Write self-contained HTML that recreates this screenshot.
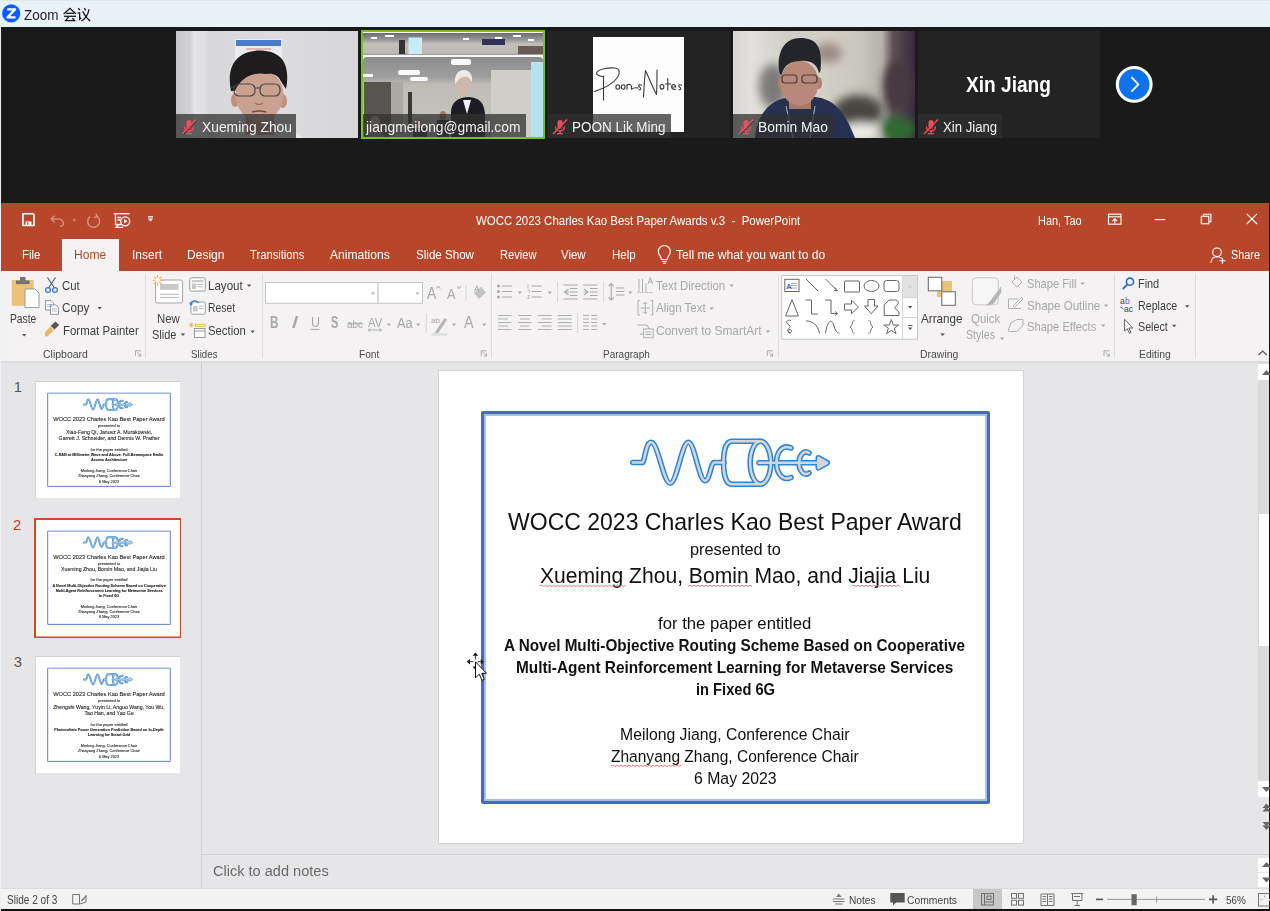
<!DOCTYPE html>
<html><head><meta charset="utf-8">
<style>
*{margin:0;padding:0;box-sizing:border-box}
html,body{width:1270px;height:911px;overflow:hidden;background:#1a1a1a}
body{position:relative;font-family:"Liberation Sans",sans-serif}
.a{position:absolute}
.t{position:absolute;white-space:nowrap;line-height:1;transform-origin:0 0}
svg{position:absolute;overflow:visible;left:0;top:0}
.tile{position:absolute;overflow:hidden}
.lbl{position:absolute;left:0;height:24px;background:rgba(48,48,48,.75)}
</style></head><body>

<div class="a" style="left:0;top:0;width:1270px;height:27px;background:#e8f3f9;border-top:1px solid #e2e6e9"></div>
<div class="a" style="left:0;top:27px;width:1270px;height:176px;background:#1a1a1a"></div>
<svg width="1270" height="30">
  <circle cx="11.2" cy="13.4" r="9.1" fill="#0b5cff"/>
  <path d="M7.2 9.4 H15.1 L7.5 17.3 H15.5" fill="none" stroke="#fff" stroke-width="2.3" stroke-linejoin="round"/>
  <g fill="none" stroke="#1a1a1a" stroke-width="1.3">
   <path d="M63.6 13.9 L70 8.3 L76 13.9"/>
   <path d="M65.8 13.3 H74.2"/>
   <path d="M64 16.3 H76"/>
   <path d="M68.8 16.6 L65.6 20.6 H74.4"/>
   <path d="M72.3 18.2 L75.2 21.2"/>
   <path d="M78.3 8.3 L79.8 10"/>
   <path d="M77.6 12.9 H79.6 V19.3 L81.2 17.8"/>
   <path d="M84.3 8.1 L85.8 10.4"/>
   <path d="M89 9.4 C88.2 14 86 18.5 81.3 21"/>
   <path d="M82.6 11.2 C84.5 15 87 18.5 90.2 20.9"/>
  </g></svg>
<div class="t" style="left:24.20px;top:6.80px;font-size:15.41px;color:#222;transform:scaleX(0.8739);">Zoom</div>
<svg width="182" height="107" style="left:176px;top:31px;overflow:hidden">
  <defs><linearGradient id="w1" x1="0" x2="1" y1="0" y2="0">
   <stop offset="0" stop-color="#c8c8ca"/><stop offset="0.08" stop-color="#d2d2d4"/><stop offset="0.1" stop-color="#e4e4e6"/><stop offset="0.16" stop-color="#e0e0e2"/>
   <stop offset="0.18" stop-color="#d8d8da"/><stop offset="0.6" stop-color="#dcdcde"/><stop offset="1" stop-color="#d6d6d8"/></linearGradient></defs>
  <rect width="182" height="107" fill="url(#w1)"/>
  <rect x="59" y="8" width="47" height="22" fill="#ececee"/>
  <rect x="60" y="9" width="45" height="6" fill="#4a7cc8"/>
  <path d="M70 18 H95" stroke="#e09090" stroke-width="1.2"/>
  <ellipse cx="84" cy="110" rx="44" ry="16" fill="#e6e6e6"/>
  <rect x="70" y="78" width="28" height="26" fill="#b88a7c"/>
  <ellipse cx="59" cy="69" rx="4" ry="7" fill="#c09080"/>
  <ellipse cx="107" cy="70" rx="4" ry="7" fill="#c09080"/>
  <ellipse cx="83.5" cy="64" rx="24" ry="26" fill="#caa090"/>
  <path d="M55 60 C50 36 60 20 83 19.5 C105 19.5 115 32 110 58 L106 52 C102 44 98 42 90 43 C80 41 66 44 59 60 Z" fill="#1e1c1d"/>
  <g fill="none" stroke="#4a4444" stroke-width="1.2"><rect x="58" y="53" width="21" height="12" rx="5"/><rect x="84" y="53" width="20" height="12" rx="5"/><path d="M79 57 H84 M54 56 H58"/></g>
  <path d="M79 72 Q83 75 87 72" stroke="#9a6a60" stroke-width="1.2" fill="none"/>
  <path d="M76 81 Q83 79 90 81" stroke="#7a4a48" stroke-width="1.4" fill="none"/>
 </svg>
<div class="a" style="left:361px;top:30px;width:184px;height:109px;border:2px solid #79c11f;background:#f6f6f6"></div>
 <svg width="180" height="105" style="left:363px;top:32px;overflow:hidden">
  <defs>
   <linearGradient id="p1" x1="0" x2="0" y1="0" y2="1"><stop offset="0" stop-color="#6c6c6e"/><stop offset="0.3" stop-color="#979798"/><stop offset="0.5" stop-color="#c0bfba"/><stop offset="0.9" stop-color="#bcbbb6"/><stop offset="1" stop-color="#9c9b98"/></linearGradient>
   <linearGradient id="p2" x1="0" x2="0" y1="0" y2="1"><stop offset="0" stop-color="#8c8c8e"/><stop offset="0.25" stop-color="#9e9e9e"/><stop offset="0.34" stop-color="#bdbcb7"/><stop offset="0.75" stop-color="#c3c2bc"/><stop offset="1" stop-color="#a9a8a3"/></linearGradient>
  </defs>
  <rect x="0" y="1" width="180" height="22" fill="url(#p1)"/>
  <g fill="#fff"><rect x="8" y="5" width="6" height="2"/><rect x="22" y="3" width="9" height="2"/><rect x="100" y="6" width="6" height="2"/><rect x="150" y="3" width="8" height="2"/><rect x="165" y="7" width="6" height="2"/><rect x="132" y="5" width="7" height="2"/></g>
  <rect x="45.5" y="5.5" width="13.5" height="16.5" fill="#c8ecf4"/>
  <rect x="119" y="7" width="23" height="6" fill="#2f3158"/>
  <rect x="36" y="8" width="6" height="14" fill="#333"/>
  <rect x="155" y="14" width="25" height="8" fill="#6a5a55"/>
  <rect x="0" y="25" width="180" height="80" rx="4" fill="url(#p2)"/>
  <g fill="#fafafa"><rect x="35" y="38" width="22" height="5" rx="2"/><rect x="47" y="45" width="18" height="4" rx="2"/><rect x="88" y="27" width="20" height="6" rx="2"/><rect x="0" y="42" width="10" height="3"/></g>
  <rect x="1" y="50" width="28" height="55" fill="#58554f"/>
  <rect x="168" y="30" width="12" height="75" fill="#b5e2ef"/>
  <rect x="128" y="38" width="40" height="67" fill="#cfcec9"/>
  <rect x="28" y="50" width="12" height="55" fill="#aaa9a4"/>
  <rect x="45" y="60" width="4" height="35" fill="#3a3836"/>
  <ellipse cx="12" cy="90" rx="5" ry="6" fill="#c8b0a0"/><rect x="5" y="95" width="15" height="10" fill="#8a8078"/>
  <ellipse cx="57" cy="92" rx="4" ry="5" fill="#b89c8c"/><rect x="50" y="96" width="14" height="9" fill="#3c3a3c"/>
  <ellipse cx="80" cy="84" rx="3.5" ry="5" fill="#9c7c70"/><rect x="74" y="88" width="12" height="17" fill="#2a2a2e"/>
  <path d="M88 105 V80 C88 70 96 65 106 65 C116 66 122 70 122 85 V105 Z" fill="#1c1c22"/>
  <path d="M100 68 L104 82 L108 68 Z" fill="#f2f2f2"/>
  <ellipse cx="100" cy="53" rx="8" ry="12" fill="#cdb8aa"/>
  <path d="M92 52 C91 42 96 38 101 38 C107 38 110 43 109 50 L106 46 C103 44 97 44 94 50 Z" fill="#ecebe8"/>
 </svg>
<div class="tile" style="left:547px;top:31px;width:183px;height:107px;background:#232323">
   <div class="a" style="left:46px;top:6px;width:91px;height:95px;background:#fdfdfd"></div>
  </div>
<svg width="1270" height="200" style="left:0;top:0"><g fill="none" stroke="#3a3a3a" stroke-width="1.1" stroke-linecap="round" stroke-linejoin="round">
   <path d="M603.5 76 V100"/>
   <path d="M603 76.5 C598 76 595.5 74 597 72 C599.5 69 608 67.5 614.5 68 C620 68.5 620.5 73 617.5 77.5 C614 82.5 605 88 594.5 91.5"/>
   <ellipse cx="617.8" cy="87" rx="1.9" ry="2.2"/><ellipse cx="623.2" cy="87" rx="1.9" ry="2.2"/>
   <path d="M627 89.3 V85 C628.5 84 631 84 631.5 86.5 V89.3 C633 88 636 87.5 638 88"/>
   <path d="M641.5 85.3 C639.5 84 637.8 85.3 639.2 86.8 C641 88 641.5 89.7 639 89.7"/>
   <path d="M643.5 97 C644 88 644.5 78 645.5 70.5 C649 78 653 88 656.5 94.5 C657 86 657 78 657 70"/>
   <ellipse cx="662" cy="86.8" rx="1.9" ry="2.3"/>
   <path d="M667.8 78.5 V90 M665.3 84 H670.5"/>
   <path d="M671.5 87 H675.7 C675.7 84.5 673.5 84 672.3 85 C670.8 86.5 671.5 90 675.5 89.3"/>
   <path d="M681.5 85.3 C679.5 84 677.8 85.3 679.2 86.8 C681 88 681.5 89.7 679 89.7"/>
  </g></svg>
<svg width="182" height="107" style="left:733px;top:31px;overflow:hidden">
  <defs>
   <linearGradient id="b1" x1="0" x2="1" y1="0" y2="0"><stop offset="0" stop-color="#d6d5d1"/><stop offset="0.1" stop-color="#e2e1dd"/><stop offset="0.3" stop-color="#cfcdc8"/><stop offset="0.5" stop-color="#d3d0c6"/><stop offset="0.7" stop-color="#c9c6bb"/><stop offset="0.82" stop-color="#b5b2aa"/><stop offset="0.88" stop-color="#5e5056"/><stop offset="1" stop-color="#35293a"/></linearGradient>
   <filter id="bl" x="-50%" y="-50%" width="200%" height="200%"><feGaussianBlur stdDeviation="5"/></filter>
  </defs>
  <rect width="182" height="107" fill="url(#b1)"/>
  <g filter="url(#bl)">
   <ellipse cx="40" cy="55" rx="14" ry="22" fill="#7c7a78"/>
   <ellipse cx="95" cy="22" rx="14" ry="10" fill="#9a8a85"/>
   <ellipse cx="125" cy="80" rx="25" ry="16" fill="#4a4642"/>
   <ellipse cx="165" cy="55" rx="15" ry="25" fill="#453b40"/>
   <ellipse cx="165" cy="98" rx="18" ry="12" fill="#2f6a30"/>
   <ellipse cx="128" cy="100" rx="18" ry="8" fill="#f0eeea"/>
  </g>
  <path d="M22 107 C24 82 38 68 58 66 H82 C102 68 112 82 122 107 Z" fill="#263150"/>
  <rect x="56" y="60" width="22" height="18" fill="#a77a6a"/>
  <ellipse cx="48" cy="52" rx="3.5" ry="6" fill="#b08070"/><ellipse cx="85.5" cy="52" rx="3.5" ry="6" fill="#b08070"/><ellipse cx="66.5" cy="52" rx="19" ry="22.5" fill="#b8897a"/>
  <path d="M46.5 42 C43 22 51 7 67 7 C83 7 90 15 87.5 40 L86 42 C84 32 76 29 67 30 C59 30 51 33 48.5 44 Z" fill="#24242b"/>
  <g fill="none" stroke="#4a3a3a" stroke-width="1.2"><rect x="49" y="44" width="15" height="8" rx="3"/><rect x="69" y="44" width="15" height="8" rx="3"/></g>
  <path d="M53 75 L60 107 M82 75 L77 107" stroke="#d8d8d8" stroke-width="0.8"/>
 </svg>
<div class="tile" style="left:918px;top:31px;width:182px;height:107px;background:#232323"></div>
<div class="t" style="left:966.30px;top:74.10px;font-size:21.80px;color:#fff;font-weight:bold;transform:scaleX(0.8761);">Xin Jiang</div>
<svg width="40" height="40" style="left:1114px;top:64px">
  <circle cx="20.2" cy="20.4" r="18.4" fill="#fff"/>
  <circle cx="20.2" cy="20.4" r="15.3" fill="#0e72ed"/>
  <path d="M17.4 13.2 L24.4 20.4 L17.4 27.6" fill="none" stroke="#fff" stroke-width="1.8"/>
 </svg>
<div class="lbl" style="left:176px;top:114.4px;width:120.0px;height:23.6px"></div>
<svg width="20" height="20" style="left:180.5px;top:119px"><g fill="#e8505b" stroke="none"><rect x="5.5" y="1" width="5" height="9" rx="2.5"/><path d="M3.5 7.5 Q3.5 12 8 12 Q12.5 12 12.5 7.5" fill="none" stroke="#e8505b" stroke-width="1.3"/><rect x="7.4" y="12" width="1.3" height="2.5"/><rect x="5" y="14" width="6" height="1.3"/></g><path d="M1 15 L15 0.5" stroke="#e8505b" stroke-width="1.5"/><path d="M2.4 15.6 L15.6 2" stroke="#303030" stroke-width="0.9"/></svg>
<div class="t" style="left:201.50px;top:120.00px;font-size:14.53px;color:#f2f2f2;transform:scaleX(0.9529);">Xueming Zhou</div>
<div class="lbl" style="left:363px;top:114.4px;width:163.0px;height:22.6px"></div>
<div class="t" style="left:366.35px;top:120.00px;font-size:14.53px;color:#f2f2f2;transform:scaleX(0.9511);">jiangmeilong@gmail.com</div>
<div class="lbl" style="left:547.5px;top:114.4px;width:123.2px;height:23.6px"></div>
<svg width="20" height="20" style="left:552.0px;top:119px"><g fill="#e8505b" stroke="none"><rect x="5.5" y="1" width="5" height="9" rx="2.5"/><path d="M3.5 7.5 Q3.5 12 8 12 Q12.5 12 12.5 7.5" fill="none" stroke="#e8505b" stroke-width="1.3"/><rect x="7.4" y="12" width="1.3" height="2.5"/><rect x="5" y="14" width="6" height="1.3"/></g><path d="M1 15 L15 0.5" stroke="#e8505b" stroke-width="1.5"/><path d="M2.4 15.6 L15.6 2" stroke="#303030" stroke-width="0.9"/></svg>
<div class="t" style="left:572.30px;top:120.00px;font-size:14.53px;color:#f2f2f2;transform:scaleX(0.9279);">POON Lik Ming</div>
<div class="lbl" style="left:733px;top:114.4px;width:99.6px;height:23.6px"></div>
<svg width="20" height="20" style="left:737.5px;top:119px"><g fill="#e8505b" stroke="none"><rect x="5.5" y="1" width="5" height="9" rx="2.5"/><path d="M3.5 7.5 Q3.5 12 8 12 Q12.5 12 12.5 7.5" fill="none" stroke="#e8505b" stroke-width="1.3"/><rect x="7.4" y="12" width="1.3" height="2.5"/><rect x="5" y="14" width="6" height="1.3"/></g><path d="M1 15 L15 0.5" stroke="#e8505b" stroke-width="1.5"/><path d="M2.4 15.6 L15.6 2" stroke="#303030" stroke-width="0.9"/></svg>
<div class="t" style="left:758.00px;top:120.00px;font-size:14.53px;color:#f2f2f2;transform:scaleX(0.9522);">Bomin Mao</div>
<div class="lbl" style="left:918px;top:114.4px;width:83.7px;height:23.6px"></div>
<svg width="20" height="20" style="left:922.5px;top:119px"><g fill="#e8505b" stroke="none"><rect x="5.5" y="1" width="5" height="9" rx="2.5"/><path d="M3.5 7.5 Q3.5 12 8 12 Q12.5 12 12.5 7.5" fill="none" stroke="#e8505b" stroke-width="1.3"/><rect x="7.4" y="12" width="1.3" height="2.5"/><rect x="5" y="14" width="6" height="1.3"/></g><path d="M1 15 L15 0.5" stroke="#e8505b" stroke-width="1.5"/><path d="M2.4 15.6 L15.6 2" stroke="#303030" stroke-width="0.9"/></svg>
<div class="t" style="left:942.80px;top:120.00px;font-size:14.53px;color:#f2f2f2;transform:scaleX(0.9062);">Xin Jiang</div>
<div class="a" style="left:0;top:203px;width:1269px;height:68px;background:#b7472a"></div>
<div class="a" style="left:1269px;top:203px;width:1px;height:708px;background:#111"></div>
<div class="a" style="left:0;top:909.4px;width:1270px;height:2px;background:#111"></div>
<svg width="1270" height="300">
 <g fill="none" stroke="#fff" stroke-width="1.6">
  <path d="M22.9 213.8 H33 L34 214.8 V225.5 H22.9 Z"/>
 </g>
 <rect x="25.5" y="221.5" width="6" height="4" fill="#fff"/>
 <rect x="27" y="222.3" width="1.3" height="2.5" fill="#b7472a"/>
 <g fill="none" stroke="#dc8f7c" stroke-width="1.5">
  <path d="M51.5 219 H58 C62 219 63.5 222 63.5 223.5 C63.5 225 62 226.5 60 226.5"/>
  <path d="M54.5 215.8 L51.3 219 L54.5 222.2"/>
  <path d="M90 216.5 A6 6 0 1 0 96.8 216.2"/>
  <path d="M95.8 213.5 L97.3 216.6 L93.8 217.6"/>
 </g>
 <path d="M72.3 219.4 H76.4 L74.35 221.4 Z" fill="#dc8f7c"/>
 <g fill="none" stroke="#fff" stroke-width="1.3">
  <path d="M113.8 213.7 H129.8"/>
  <path d="M115.5 214 V224.5 H121"/>
  <path d="M117.5 217.5 H121 M117.5 220 H120"/>
  <circle cx="125.2" cy="221.3" r="4.5"/>
  <path d="M118.5 224.5 L116 227.3 H123"/>
 </g>
 <path d="M124 219 L127.5 221.3 L124 223.6 Z" fill="#fff"/>
 <rect x="148" y="216.2" width="5" height="1.2" fill="#fff"/>
 <path d="M147.8 218.5 H153.2 L150.5 221.5 Z" fill="#fff"/>
 <!-- right icons -->
 <g fill="none" stroke="#fff" stroke-width="1.1">
  <rect x="1108.5" y="214.2" width="12.5" height="10"/>
  <path d="M1108.5 216.8 H1121"/>
  <path d="M1114.75 223.5 V218.8 M1112.5 221 L1114.75 218.8 L1117 221"/>
  <path d="M1154.8 219.6 H1165.2"/>
  <rect x="1201.3" y="216.3" width="7.5" height="7.5"/>
  <path d="M1203.5 216.3 V214.2 H1210.9 V221.6 H1208.8"/>
  <path d="M1246.8 213.8 L1257 224 M1257 213.8 L1246.8 224"/>
  <circle cx="1217" cy="252.3" r="4.3"/>
  <path d="M1210.8 262.7 C1211.5 258.5 1214 256.8 1217 256.8 C1219 256.8 1220.5 257.4 1221.6 258.4"/>
  <path d="M1219.5 260.8 H1225.5 M1222.5 257.8 V263.8"/>
 </g>
 <!-- bulb -->
 <g fill="none" stroke="#fff" stroke-width="1.1">
  <path d="M661.5 259.5 C661.5 256.5 658.3 255 658.3 251.5 A6 6 0 0 1 670.3 251.5 C670.3 255 667.3 256.5 667.3 259.5 Z"/>
  <path d="M662 261.5 H666.8 M662.8 263.3 H666"/>
 </g>
</svg>
<div class="t" style="left:475.60px;top:213.60px;font-size:13.23px;color:#fff;transform:scaleX(0.8666);">WOCC 2023 Charles Kao Best Paper Awards v.3&nbsp;&nbsp;-&nbsp;&nbsp;PowerPoint</div>
<div class="t" style="left:1037.80px;top:213.50px;font-size:13.23px;color:#fff;transform:scaleX(0.8272);">Han, Tao</div>
<div class="a" style="left:61.5px;top:239px;width:57.2px;height:33px;background:#f4f2f3"></div>
<div class="t" style="left:22.00px;top:248.30px;font-size:13.08px;color:#fff;transform:scaleX(0.8770);">File</div>
<div class="t" style="left:73.60px;top:248.30px;font-size:13.08px;color:#b7472a;transform:scaleX(0.9228);">Home</div>
<div class="t" style="left:132.00px;top:248.30px;font-size:13.08px;color:#fff;transform:scaleX(0.9173);">Insert</div>
<div class="t" style="left:186.50px;top:248.30px;font-size:13.08px;color:#fff;transform:scaleX(0.9210);">Design</div>
<div class="t" style="left:249.60px;top:248.30px;font-size:13.08px;color:#fff;transform:scaleX(0.8570);">Transitions</div>
<div class="t" style="left:330.30px;top:248.30px;font-size:13.08px;color:#fff;transform:scaleX(0.9224);">Animations</div>
<div class="t" style="left:416.00px;top:248.30px;font-size:13.08px;color:#fff;transform:scaleX(0.8859);">Slide Show</div>
<div class="t" style="left:499.50px;top:248.30px;font-size:13.08px;color:#fff;transform:scaleX(0.8500);">Review</div>
<div class="t" style="left:561.30px;top:248.30px;font-size:13.08px;color:#fff;transform:scaleX(0.8772);">View</div>
<div class="t" style="left:612.00px;top:248.30px;font-size:13.08px;color:#fff;transform:scaleX(0.8806);">Help</div>
<div class="t" style="left:675.80px;top:248.30px;font-size:13.08px;color:#fff;transform:scaleX(0.9249);">Tell me what you want to do</div>
<div class="t" style="left:1230.70px;top:248.30px;font-size:13.08px;color:#fff;transform:scaleX(0.8282);">Share</div>
<div class="a" style="left:0;top:271px;width:1269px;height:90px;background:#f4f2f3"></div>
<div class="a" style="left:0;top:360.5px;width:1269px;height:2px;background:#dcdcdd"></div>
<div class="a" style="left:0;top:271px;width:1px;height:640px;background:#e9e9e9"></div>
<div class="a" style="left:145.3px;top:274px;width:1px;height:84px;background:#dedede"></div>
<div class="a" style="left:261.7px;top:274px;width:1px;height:84px;background:#dedede"></div>
<div class="a" style="left:491.1px;top:274px;width:1px;height:84px;background:#dedede"></div>
<div class="a" style="left:777.5px;top:274px;width:1px;height:84px;background:#dedede"></div>
<div class="a" style="left:1114.3px;top:274px;width:1px;height:84px;background:#dedede"></div>
<div class="a" style="left:1194.7px;top:274px;width:1px;height:84px;background:#dedede"></div>
<div class="t" style="left:43.10px;top:347.60px;font-size:11.63px;color:#4a4a4a;transform:scaleX(0.9022);">Clipboard</div>
<div class="t" style="left:190.50px;top:347.60px;font-size:11.63px;color:#4a4a4a;transform:scaleX(0.8371);">Slides</div>
<div class="t" style="left:359.20px;top:347.60px;font-size:11.63px;color:#4a4a4a;transform:scaleX(0.8729);">Font</div>
<div class="t" style="left:603.20px;top:347.60px;font-size:11.63px;color:#4a4a4a;transform:scaleX(0.8618);">Paragraph</div>
<div class="t" style="left:919.60px;top:347.60px;font-size:11.63px;color:#4a4a4a;transform:scaleX(0.9004);">Drawing</div>
<div class="t" style="left:1139.30px;top:347.60px;font-size:11.63px;color:#4a4a4a;transform:scaleX(0.8945);">Editing</div>
<div class="t" style="left:9.70px;top:312.70px;font-size:12.06px;color:#3f3f3f;transform:scaleX(0.8524);">Paste</div>
<div class="t" style="left:62.30px;top:279.50px;font-size:12.06px;color:#3f3f3f;transform:scaleX(0.9435);">Cut</div>
<div class="t" style="left:62.30px;top:301.90px;font-size:12.06px;color:#3f3f3f;transform:scaleX(0.9727);">Copy</div>
<div class="t" style="left:62.60px;top:325.00px;font-size:12.06px;color:#3f3f3f;transform:scaleX(0.9502);">Format Painter</div>
<div class="t" style="left:156.80px;top:312.60px;font-size:12.06px;color:#3f3f3f;transform:scaleX(0.9438);">New</div>
<div class="t" style="left:151.60px;top:329.40px;font-size:12.06px;color:#3f3f3f;transform:scaleX(0.9100);">Slide</div>
<div class="t" style="left:207.90px;top:279.50px;font-size:12.06px;color:#3f3f3f;transform:scaleX(0.9607);">Layout</div>
<div class="t" style="left:207.90px;top:302.00px;font-size:12.06px;color:#3f3f3f;transform:scaleX(0.8599);">Reset</div>
<div class="t" style="left:207.90px;top:325.00px;font-size:12.06px;color:#3f3f3f;transform:scaleX(0.9395);">Section</div>
<div class="t" style="left:656.30px;top:279.70px;font-size:12.06px;color:#a8a8a8;transform:scaleX(0.9469);">Text Direction</div>
<div class="t" style="left:656.30px;top:302.40px;font-size:12.06px;color:#a8a8a8;transform:scaleX(0.9542);">Align Text</div>
<div class="t" style="left:656.30px;top:325.30px;font-size:12.06px;color:#a8a8a8;transform:scaleX(0.9917);">Convert to SmartArt</div>
<div class="t" style="left:920.90px;top:312.80px;font-size:12.06px;color:#3f3f3f;transform:scaleX(0.9693);">Arrange</div>
<div class="t" style="left:970.60px;top:312.80px;font-size:12.06px;color:#a8a8a8;transform:scaleX(0.9496);">Quick</div>
<div class="t" style="left:966.20px;top:329.40px;font-size:12.06px;color:#a8a8a8;transform:scaleX(0.8830);">Styles</div>
<div class="t" style="left:1026.60px;top:278.20px;font-size:12.06px;color:#a8a8a8;transform:scaleX(0.9226);">Shape Fill</div>
<div class="t" style="left:1026.60px;top:299.50px;font-size:12.06px;color:#a8a8a8;transform:scaleX(0.9600);">Shape Outline</div>
<div class="t" style="left:1026.60px;top:320.70px;font-size:12.06px;color:#a8a8a8;transform:scaleX(0.9267);">Shape Effects</div>
<div class="t" style="left:1138.20px;top:277.80px;font-size:12.06px;color:#3f3f3f;transform:scaleX(0.9035);">Find</div>
<div class="t" style="left:1138.20px;top:299.50px;font-size:12.06px;color:#3f3f3f;transform:scaleX(0.8876);">Replace</div>
<div class="t" style="left:1138.20px;top:320.70px;font-size:12.06px;color:#3f3f3f;transform:scaleX(0.8885);">Select</div>
<div class="t" style="left:270.40px;top:315.10px;font-size:15.99px;color:#a8a8a8;font-weight:bold;transform:scaleX(0.7358);">B</div>
<div class="t" style="left:291.20px;top:315.10px;font-size:15.99px;color:#a8a8a8;font-style:italic;transform:scaleX(1.7130);">I</div>
<div class="t" style="left:310.50px;top:315.00px;font-size:14.53px;color:#a8a8a8;transform:scaleX(0.8570);">U</div>
<div class="t" style="left:331.00px;top:315.10px;font-size:15.99px;color:#a8a8a8;font-weight:bold;transform:scaleX(0.6934);">S</div>
<div class="t" style="left:347.00px;top:318.50px;font-size:10.90px;color:#a8a8a8;transform:scaleX(0.9102);">abc</div>
<div class="t" style="left:367.70px;top:315.50px;font-size:13.08px;color:#a8a8a8;transform:scaleX(0.8615);">AV</div>
<div class="t" style="left:396.50px;top:315.10px;font-size:15.26px;color:#a8a8a8;transform:scaleX(0.8398);">Aa</div>
<div class="t" style="left:464.00px;top:315.10px;font-size:15.99px;color:#a8a8a8;transform:scaleX(0.8995);">A</div>
<div class="t" style="left:427.30px;top:285.60px;font-size:16.72px;color:#a8a8a8;transform:scaleX(0.8246);">A</div>
<div class="t" style="left:447.00px;top:286.60px;font-size:14.53px;color:#a8a8a8;transform:scaleX(0.8761);">A</div>
<svg width="1270" height="400">
<path d="M22 334 h4.4 l-2.2 2.4 z" fill="#555"/>
<path d="M97.4 307 h4.4 l-2.2 2.4 z" fill="#555"/>
<path d="M180.7 333.5 h4.4 l-2.2 2.4 z" fill="#555"/>
<path d="M246.9 284.5 h4.4 l-2.2 2.4 z" fill="#555"/>
<path d="M250.4 330.5 h4.4 l-2.2 2.4 z" fill="#555"/>
<path d="M386.6 323.5 h4.4 l-2.2 2.4 z" fill="#a8a8a8"/>
<path d="M416 323.5 h4.4 l-2.2 2.4 z" fill="#a8a8a8"/>
<path d="M451.8 323.5 h4.4 l-2.2 2.4 z" fill="#a8a8a8"/>
<path d="M482 323.5 h4.4 l-2.2 2.4 z" fill="#a8a8a8"/>
<path d="M517.6 291.5 h4.4 l-2.2 2.4 z" fill="#a8a8a8"/>
<path d="M547.6 291.5 h4.4 l-2.2 2.4 z" fill="#a8a8a8"/>
<path d="M628 291.5 h4.4 l-2.2 2.4 z" fill="#a8a8a8"/>
<path d="M602 323 h4.4 l-2.2 2.4 z" fill="#a8a8a8"/>
<path d="M729.5 284.5 h4.4 l-2.2 2.4 z" fill="#a8a8a8"/>
<path d="M709.5 307.5 h4.4 l-2.2 2.4 z" fill="#a8a8a8"/>
<path d="M765.7 330.5 h4.4 l-2.2 2.4 z" fill="#a8a8a8"/>
<path d="M940.4 333.5 h4.4 l-2.2 2.4 z" fill="#555"/>
<path d="M999.9 337.5 h4.4 l-2.2 2.4 z" fill="#a8a8a8"/>
<path d="M1080.4 282.5 h4.4 l-2.2 2.4 z" fill="#a8a8a8"/>
<path d="M1104 304.5 h4.4 l-2.2 2.4 z" fill="#a8a8a8"/>
<path d="M1101 324.5 h4.4 l-2.2 2.4 z" fill="#a8a8a8"/>
<path d="M371.5 292 h4.4 l-2.2 2.4 z" fill="#a8a8a8"/>
<path d="M416.5 292 h4.4 l-2.2 2.4 z" fill="#a8a8a8"/>
<path d="M1185 305.3 h4.4 l-2.2 2.4 z" fill="#555"/>
<path d="M1172 324.8 h4.4 l-2.2 2.4 z" fill="#555"/>

 <!-- paste -->
 <rect x="11.8" y="280" width="21.9" height="25.8" fill="#ebc27a"/>
 <rect x="16" y="280.5" width="13.5" height="3.6" fill="#737373"/>
 <rect x="20" y="277" width="5.5" height="4" fill="#737373"/>
 <path d="M25 289 H35 L39 293 V307.6 H25 Z" fill="#fff" stroke="#9a9a9a" stroke-width="1"/>
 <!-- scissors -->
 <g fill="none" stroke="#555" stroke-width="1.1"><path d="M47.5 277.5 L54.5 288 M55.5 277.5 L48.5 288"/></g>
 <g fill="none" stroke="#3d7ad6" stroke-width="1.3"><circle cx="48" cy="290" r="2.4"/><circle cx="55" cy="290" r="2.4"/></g>
 <!-- copy -->
 <g fill="#fff" stroke="#8a8a8a" stroke-width="0.9"><path d="M45.5 300.5 H51 L53.5 303 V310 H45.5 Z"/><path d="M50.5 305 H56 L58.5 307.5 V314.3 H50.5 Z"/></g>
 <g stroke="#7aa0d8" stroke-width="0.7"><path d="M47 304.5 H52 M47 306.5 H52 M52 309 H57 M52 311 H57"/></g>
 <!-- format painter -->
 <path d="M45 332 L50.5 326.5 L54 330 L48.5 335.5 Q46 337.5 45 336 Z" fill="#e5b86b"/>
 <path d="M50.8 326 L55.5 321.5 L59.2 325 L54.5 329.5 Z" fill="#555"/>
 <!-- new slide -->
 <rect x="155.6" y="280" width="27" height="23" rx="2" fill="#fff" stroke="#a6a6a6" stroke-width="1"/>
 <rect x="160" y="284" width="18.6" height="5.8" fill="#c8c8c8"/>
 <path d="M160 294.3 H178.6 M160 297.4 H178.6" stroke="#a6a6a6" stroke-width="0.8"/>
 <g stroke="#e8b65a" stroke-width="1.1"><path d="M157.7 275 V285.7 M152.4 280.3 H163 M154 276.6 L161.4 284 M161.4 276.6 L154 284"/></g>
 <circle cx="157.7" cy="280.3" r="2.2" fill="#fff"/>
 <!-- layout -->
 <rect x="189.8" y="277.8" width="15.5" height="13.3" rx="1.5" fill="#fff" stroke="#9a9a9a"/>
 <rect x="191.8" y="280" width="11.5" height="2.2" fill="#c8c8c8"/><rect x="191.8" y="283.5" width="4.5" height="5.5" fill="#c8c8c8"/>
 <path d="M197.5 284.5 H203 M197.5 286.8 H203" stroke="#aaa" stroke-width="0.8"/>
 <!-- reset -->
 <rect x="191" y="302" width="14.3" height="12.2" rx="1.5" fill="#fff" stroke="#9a9a9a"/>
 <rect x="193" y="306" width="4.5" height="5.5" fill="#c8c8c8"/><path d="M198.5 306 H203.5 M198.5 308.5 H203.5" stroke="#aaa" stroke-width="0.8"/>
 <path d="M190.5 304.5 C191.5 300.5 196.5 299.5 198.5 303" fill="none" stroke="#3d7ad6" stroke-width="1.4"/>
 <path d="M189.3 302.3 L190.5 306 L193.3 303.8 Z" fill="#3d7ad6"/>
 <!-- section -->
 <rect x="194.5" y="328.5" width="10.5" height="9" fill="#fff" stroke="#9a9a9a"/>
 <path d="M194.5 331 H205" stroke="#9a9a9a"/>
 <rect x="195.5" y="324.3" width="9.5" height="2.3" fill="#fff" stroke="#e8b65a" stroke-width="0.9"/>
 <g stroke="#e8b65a" stroke-width="0.9"><path d="M191.3 322.5 V327.5 M188.8 325 H193.8 M189.5 323.2 L193 326.8 M193 323.2 L189.5 326.8"/></g>
 <!-- font boxes -->
 <rect x="265.5" y="282.5" width="112.6" height="20.8" fill="#fff" stroke="#c6c6c6"/>
 <rect x="378.1" y="282.5" width="44.4" height="20.8" fill="#fff" stroke="#c6c6c6"/>
 <path d="M371 292.5 h4 l-2 2.2z M415.5 292.5 h4 l-2 2.2z" fill="#a8a8a8"/>
 <path d="M436.5 288.5 L438.3 286 L440.1 288.5 M457.3 286.2 L459.1 288.7 L460.9 286.2" fill="none" stroke="#a8a8a8" stroke-width="1"/>
 <path d="M466 285 V301" stroke="#d8d8d8"/>
 <path d="M474 293 L479 299 L486 292.5 L481 286.8 Z" fill="#c3c3c3"/>
 <path d="M474.5 291.5 L476.8 285.5 L479 291.5 M475.3 289.5 H478.3" fill="none" stroke="#a8a8a8" stroke-width="0.9"/>
 <path d="M310.5 329.4 H319.5" stroke="#a8a8a8" stroke-width="1"/>
 <path d="M347.5 323.8 H363" stroke="#a8a8a8" stroke-width="0.9"/>
 <path d="M368.2 330 H381.5 M368.2 330 L370.3 328.3 M368.2 330 L370.3 331.7 M381.5 330 L379.4 328.3 M381.5 330 L379.4 331.7" fill="none" stroke="#a8a8a8" stroke-width="0.9"/>
 <path d="M426.3 313 V333" stroke="#d8d8d8"/>
 <path d="M434.5 333 L444.5 318 L447 319.8 L437 334.8 Z" fill="#b5b5b5"/>
 <path d="M431.5 333 H447.3 V335.8 H431.5Z" fill="#e0e0e0"/>
 <text x="431" y="323" font-size="8" fill="#a8a8a8" font-family="Liberation Sans">ab</text>
 <!-- paragraph -->
 <g fill="#a8a8a8"><circle cx="498.5" cy="286" r="1.5"/><circle cx="498.5" cy="291.5" r="1.5"/><circle cx="498.5" cy="297" r="1.5"/></g>
 <path d="M502 286 H512.2 M502 291.5 H512.2 M502 297 H512.2" stroke="#a8a8a8" stroke-width="1"/>
 <path d="M531.5 286 H541.7 M531.5 291.5 H541.7 M531.5 297 H541.7" stroke="#a8a8a8" stroke-width="1"/>
 <path d="M528 284.5 V288.5 M527.7 290 H529.3 V293 M527.7 295.5 H529.5 L527.7 298.5 H529.5" fill="none" stroke="#a8a8a8" stroke-width="0.7"/>
 <path d="M557.5 282 V302" stroke="#d8d8d8"/>
 <path d="M563.5 285 H577.5 M570 288.5 H577.5 M570 292 H577.5 M570 295.5 H577.5 M563.5 299 H577.5" stroke="#a8a8a8" stroke-width="1"/>
 <path d="M568.5 289 L564.5 292 L568.5 295 M564.5 292 H569" fill="none" stroke="#a8a8a8" stroke-width="1.1"/>
 <path d="M583 285 H597.5 M590 288.5 H597.5 M590 292 H597.5 M590 295.5 H597.5 M583 299 H597.5" stroke="#a8a8a8" stroke-width="1"/>
 <path d="M584 289 L588 292 L584 295 M583.5 292 H588" fill="none" stroke="#a8a8a8" stroke-width="1.1"/>
 <path d="M603.6 282 V302" stroke="#d8d8d8"/>
 <path d="M611.2 283.5 V300 M608.7 286 L611.2 283.5 L613.7 286 M608.7 297.5 L611.2 300 L613.7 297.5" fill="none" stroke="#a8a8a8" stroke-width="1.1"/>
 <path d="M616 288 H624.4 M616 291.5 H624.4 M616 295 H624.4" stroke="#a8a8a8" stroke-width="1"/>
 <path d="M498 315.5 H511.5 M498 319 H508 M498 322.5 H511.5 M498 326 H508 M498 329.5 H511.5" stroke="#b0b0b0" stroke-width="1"/>
 <path d="M518 315.5 H531.5 M520 319 H529.5 M518 322.5 H531.5 M520 326 H529.5 M518 329.5 H531.5" stroke="#b0b0b0" stroke-width="1"/>
 <path d="M538 315.5 H551.7 M541.5 319 H551.7 M538 322.5 H551.7 M541.5 326 H551.7 M538 329.5 H551.7" stroke="#b0b0b0" stroke-width="1"/>
 <path d="M557.8 315.5 H571.8 M557.8 319 H571.8 M557.8 322.5 H571.8 M557.8 326 H571.8 M557.8 329.5 H571.8" stroke="#b0b0b0" stroke-width="1"/>
 <path d="M577.6 313 V333" stroke="#d8d8d8"/>
 <path d="M583 315.5 H589 M583 319 H589 M583 322.5 H589 M583 326 H589 M583 329.5 H589 M591.3 315.5 H597.3 M591.3 319 H597.3 M591.3 322.5 H597.3 M591.3 326 H597.3 M591.3 329.5 H597.3" stroke="#b0b0b0" stroke-width="1"/>
 <g fill="none" stroke="#b0b0b0" stroke-width="1">
  <path d="M639 279 V292 M642.5 279 V292 M646 283.5 V292"/>
  <path d="M637.5 292.5 H653.5" stroke-dasharray="1.3 1"/>
  <path d="M648 284 L650.3 277.5 L652.6 284 M648.8 282 H651.8"/>
  <path d="M640 300.5 H638 V315 H640 M650.5 300.5 H652.7 V315 H650.5"/>
  <path d="M645.3 302 V313.8 M643.3 304 L645.3 302 L647.3 304 M643.3 311.8 L645.3 313.8 L647.3 311.8 M640.5 308 H650"/>
  <path d="M637.5 325 L647 325 L649.5 329.5 L647 334 H640"/>
  <rect x="643.5" y="329" width="9.7" height="8.7" fill="#f3f2f2"/>
  <path d="M645.5 332 H651.3 M645.5 334.5 H651.3"/>
 </g>
 <!-- shapes gallery -->
 <rect x="781.8" y="275.5" width="135.7" height="63.7" fill="#fff" stroke="#c6c6c6"/>
 <rect x="902.6" y="276" width="14.6" height="21.4" fill="#e2e2e2"/>
 <path d="M902.6 275.5 V339.2 M902.6 297.4 H917.5 M902.6 317.5 H917.5" stroke="#d4d4d4"/>
 <path d="M908 287.5 h4.4 l-2.2 -2.4z" fill="#c8c8c8"/>
 <path d="M908 306 h4.4 l-2.2 2.4z M908 327.5 h4.4 l-2.2 2.4z" fill="#555"/>
 <path d="M908 325.5 h4.4" stroke="#555" stroke-width="1"/>
 <g fill="none" stroke="#666" stroke-width="1">
  <rect x="784.8" y="279.3" width="14.2" height="12.2"/>
  <path d="M791 283.5 H797 M791 285.5 H797 M787 288 H797" stroke="#888" stroke-width="0.7"/>
  <path d="M806 279 L818 291 M825.5 279 L837 290.5"/>
  <path d="M835 287.5 L837.3 290.8 L834 290.5" />
  <rect x="844.5" y="281" width="15" height="11" rx="0.5"/>
  <ellipse cx="871.5" cy="286" rx="7.5" ry="5.5"/>
  <rect x="884" y="280.5" width="15" height="11" rx="2.5"/>
  <path d="M785.6 316 L792 299.8 L798.4 316 Z"/>
  <path d="M805.5 300 H811.5 V314 H818"/>
  <path d="M825 300 H831 V313.5 H837.5 M835 311.5 L837.5 313.5 L835 315.5"/>
  <path d="M844.5 304 H851.5 V300.3 L858.5 307 L851.5 313.7 V310 H844.5 Z"/>
  <path d="M868 299.5 H874.5 V306 H878 L871.2 313.7 L864.5 306 H868 Z"/>
  <path d="M884.2 315.5 V305 L889 300 H895.5 C898 300 899 302.5 898 304 L894.5 308 L899 312 V315.5 Z"/>
  <path d="M791 320.5 C787 319 785 323 789 325 C793 327 786 329 788 331.5 C790 334 793 332 791 330 C789 328 787 332 790.5 334"/>
  <path d="M806 321 C812 320.5 818 325 819.5 333.5"/>
  <path d="M825.5 333 C827.5 320 832 318 834 326 C836 333 838.5 333 839.5 333"/>
  <path d="M854.5 320.5 C851.5 320.5 853 326 850 327 C853 328 851.5 333.5 854.5 333.5"/>
  <path d="M868.5 320.5 C871.5 320.5 870 326 873 327 C870 328 871.5 333.5 868.5 333.5"/>
  <path d="M891.3 319.5 L893.2 325 L898.7 325 L894.2 328.2 L896 333.7 L891.3 330.3 L886.6 333.7 L888.4 328.2 L883.9 325 L889.4 325 Z"/>
 </g>
 <text x="786" y="289" font-size="8" font-weight="bold" fill="#3d6fc2" font-family="Liberation Sans">A</text>
 <!-- arrange -->
 <rect x="937" y="281" width="15" height="16" fill="#ebc27a"/>
 <rect x="928.3" y="277.3" width="13.5" height="13.5" fill="#fff" stroke="#6a6a6a" stroke-width="1"/>
 <rect x="941.8" y="291.8" width="13.5" height="13.5" fill="#fff" stroke="#6a6a6a" stroke-width="1"/>
 <!-- quick styles -->
 <rect x="972.3" y="277.8" width="26" height="27" rx="4" fill="#f6f6f6" stroke="#c8c8c8" stroke-width="1"/>
 <path d="M986 306 L991 300 L1001 286.5 L1001.5 292 L994 303.5 Z" fill="#b5b5b5"/>
 <!-- shape fill/outline/effects -->
 <g fill="none" stroke="#b0b0b0" stroke-width="1">
  <path d="M1012 282 L1017 277 L1022 282 L1017 287 Z"/><path d="M1014.5 279.5 V275.5"/>
  <path d="M1008.5 299 H1018 M1008.5 299 V308.5 H1021"/><path d="M1013 306 L1021.5 297.5 L1023 299 L1014.5 307.5 Z"/>
  <path d="M1011 323 L1017 319.5 H1023 V325 L1017 331.5 H1009.5 C1008 331.5 1008 329 1009 328 Z"/>
 </g>
 <!-- find/replace/select -->
 <circle cx="1130" cy="281.7" r="3.6" fill="none" stroke="#2f6bc2" stroke-width="1.6"/>
 <path d="M1127.4 284.4 L1122.8 289" stroke="#2f6bc2" stroke-width="1.8"/>
 <text x="1120" y="304" font-size="8.5" fill="#444" font-family="Liberation Sans">a</text>
 <text x="1125" y="304" font-size="8.5" fill="#8a4bb5" font-family="Liberation Sans">b</text>
 <text x="1124" y="311.5" font-size="8.5" fill="#444" font-family="Liberation Sans">ac</text>
 <path d="M1120.3 307 L1123.5 309" stroke="#2f6bc2" stroke-width="1"/>
 <path d="M1124.6 319.3 V331 L1127.2 328.6 L1129.5 333.3 L1131 332.5 L1128.8 328 L1132.7 328 Z" fill="#fff" stroke="#555" stroke-width="0.9"/>
 <!-- launchers -->
 <g fill="none" stroke="#9a9a9a" stroke-width="0.8">
  <path d="M135.5 356 V350.8 H141 M137 352.3 L140.8 356 M140.8 353.5 V356 H138.3"/>
  <path d="M481.3 356 V350.8 H486.8 M482.8 352.3 L486.6 356 M486.6 353.5 V356 H484.1"/>
  <path d="M767.3 356 V350.8 H772.8 M768.8 352.3 L772.6 356 M772.6 353.5 V356 H770.1"/>
  <path d="M1104 356 V350.8 H1109.5 M1105.5 352.3 L1109.3 356 M1109.3 353.5 V356 H1106.8"/>
 </g>
 <path d="M1258.5 355 L1262.7 351 L1266.8 355" fill="none" stroke="#555" stroke-width="1.2"/>
</svg>
<div class="a" style="left:1px;top:362.5px;width:1268px;height:526px;background:#e6e6e8"></div>
<div class="a" style="left:201.2px;top:363px;width:1px;height:525px;background:#cfcfd1"></div>
<div class="a" style="left:202px;top:854px;width:1067px;height:1px;background:#d0d0d2"></div>
<div class="a" style="left:438.0px;top:370px;width:586px;height:474px;background:#fefefe;border:1px solid #d2d2d2">
<div class="a" style="left:-1px;top:-0.5px;width:586px;height:474px">
<div class="a" style="left:43.0px;top:40.5px;width:509px;height:393px;border:3px solid #4569c6;border-radius:2px"></div>
<div class="a" style="left:46.0px;top:43.5px;width:503px;height:387px;border:2px solid #a9bde6"></div>
<svg width="600" height="480" style="left:0;top:0"><g transform="translate(-438.0,-370.5)" fill="none" stroke-linecap="round" stroke-linejoin="round"><path d="M632.8 462 H642.5 C644.8 462 645.5 441.8 651.2 441.8 C658.1 441.8 663.3 482.7 670.2 482.7 C676.8 482.7 681.8 441.8 688.4 441.8 C694.4 441.8 699 480.2 705 480.2 C710 480.2 710.5 462 714.4 462 H724" stroke="#2a86d9" stroke-width="5.6"/><path d="M760 440.8 H732 C726 440.8 723.5 450 723.5 462.2 C723.5 474 726 483.7 732 483.7 H760" stroke="#2a86d9" stroke-width="5.6"/><path d="M760.5 440.8 C766 440.8 770.8 450 770.8 462.2 C770.8 474 766 483.7 760.5 483.7 C755 483.7 750.2 474 750.2 462.2 C750.2 450 755 440.8 760.5 440.8 Z" stroke="#2a86d9" stroke-width="5.6"/><path d="M759 462.3 H818" stroke="#2a86d9" stroke-width="5.6"/><path d="M791 447.5 C782 443.5 776.5 452 776.5 462 C776.5 472 782 481 791 477" stroke="#2a86d9" stroke-width="5.6"/><path d="M809 452.5 C803.5 448.5 799 456 799 462.5 C799 469 803.5 476.5 809 472.5" stroke="#2a86d9" stroke-width="5.6"/><path d="M818.3 457.2 L827.3 462.3 L818.3 467.4 Z" stroke="#2a86d9" stroke-width="5.6"/><path d="M632.8 462 H642.5 C644.8 462 645.5 441.8 651.2 441.8 C658.1 441.8 663.3 482.7 670.2 482.7 C676.8 482.7 681.8 441.8 688.4 441.8 C694.4 441.8 699 480.2 705 480.2 C710 480.2 710.5 462 714.4 462 H724" stroke="#d6d6d6" stroke-width="2.5"/><path d="M760 440.8 H732 C726 440.8 723.5 450 723.5 462.2 C723.5 474 726 483.7 732 483.7 H760" stroke="#d6d6d6" stroke-width="2.5"/><path d="M760.5 440.8 C766 440.8 770.8 450 770.8 462.2 C770.8 474 766 483.7 760.5 483.7 C755 483.7 750.2 474 750.2 462.2 C750.2 450 755 440.8 760.5 440.8 Z" stroke="#d6d6d6" stroke-width="2.5"/><path d="M759 462.3 H818" stroke="#d6d6d6" stroke-width="2.5"/><path d="M791 447.5 C782 443.5 776.5 452 776.5 462 C776.5 472 782 481 791 477" stroke="#d6d6d6" stroke-width="2.5"/><path d="M809 452.5 C803.5 448.5 799 456 799 462.5 C799 469 803.5 476.5 809 472.5" stroke="#d6d6d6" stroke-width="2.5"/><path d="M818.3 457.2 L827.3 462.3 L818.3 467.4 Z" stroke="#d6d6d6" stroke-width="2.5" fill="#d6d6d6"/></g></svg>
<div class="t" style="left:70.40px;top:140.40px;font-size:23.26px;color:#111;transform:scaleX(0.9900);">WOCC 2023 Charles Kao Best Paper Award</div>
<div class="t" style="left:251.90px;top:171.20px;font-size:15.72px;color:#111;transform:scaleX(1.0397);">presented to</div>
<div class="t" style="left:101.90px;top:195.20px;font-size:21.51px;color:#111;transform:scaleX(0.9807);">Xueming Zhou, Bomin Mao, and Jiajia Liu</div>
<div class="t" style="left:220.40px;top:244.80px;font-size:16.28px;color:#111;transform:scaleX(1.0269);">for the paper entitled</div>
<div class="t" style="left:66.40px;top:267.80px;font-size:15.84px;color:#111;font-weight:bold;transform:scaleX(0.9664);">A Novel Multi-Objective Routing Scheme Based on Cooperative</div>
<div class="t" style="left:78.30px;top:289.90px;font-size:15.84px;color:#111;font-weight:bold;transform:scaleX(0.9710);">Multi-Agent Reinforcement Learning for Metaverse Services</div>
<div class="t" style="left:257.80px;top:311.50px;font-size:15.84px;color:#111;font-weight:bold;transform:scaleX(0.9263);">in Fixed 6G</div>
<div class="t" style="left:182.30px;top:355.90px;font-size:16.13px;color:#111;transform:scaleX(0.9783);">Meilong Jiang, Conference Chair</div>
<div class="t" style="left:173.00px;top:377.90px;font-size:16.13px;color:#111;transform:scaleX(0.9634);">Zhanyang Zhang, Conference Chair</div>
<div class="t" style="left:255.70px;top:399.90px;font-size:16.13px;color:#111;transform:scaleX(0.9810);">6 May 2023</div>
<svg width="600" height="480"><g transform="translate(-438.0,-370.5)"><path d="M539.5 585.3 L541.5 584.5999999999999 L543.5 586.0 L545.5 584.5999999999999 L547.5 586.0 L549.5 584.5999999999999 L551.5 586.0 L553.5 584.5999999999999 L555.5 586.0 L557.5 584.5999999999999 L559.5 586.0 L561.5 584.5999999999999 L563.5 586.0 L565.5 584.5999999999999 L567.5 586.0 L569.5 584.5999999999999 L571.5 586.0 L573.5 584.5999999999999 L575.5 586.0 L577.5 584.5999999999999 L579.5 586.0 L581.5 584.5999999999999 L583.5 586.0 L585.5 584.5999999999999 L587.5 586.0 L589.5 584.5999999999999 L591.5 586.0 L593.5 584.5999999999999 L595.5 586.0 L597.5 584.5999999999999 L599.5 586.0 L601.5 584.5999999999999 L603.5 586.0 L605.5 584.5999999999999 L607.5 586.0 L609.5 584.5999999999999 L611.5 586.0 L613.5 584.5999999999999 L615.5 586.0 L617.5 584.5999999999999 L619.5 586.0 L621.5 584.5999999999999 L623.5 586.0 L625.5 584.5999999999999" fill="none" stroke="#e06060" stroke-width="0.8"/><path d="M688 585.3 L690.0 584.5999999999999 L692.0 586.0 L694.0 584.5999999999999 L696.0 586.0 L698.0 584.5999999999999 L700.0 586.0 L702.0 584.5999999999999 L704.0 586.0 L706.0 584.5999999999999 L708.0 586.0 L710.0 584.5999999999999 L712.0 586.0 L714.0 584.5999999999999 L716.0 586.0 L718.0 584.5999999999999 L720.0 586.0 L722.0 584.5999999999999 L724.0 586.0 L726.0 584.5999999999999 L728.0 586.0 L730.0 584.5999999999999 L732.0 586.0 L734.0 584.5999999999999 L736.0 586.0 L738.0 584.5999999999999 L740.0 586.0 L742.0 584.5999999999999 L744.0 586.0 L746.0 584.5999999999999 L748.0 586.0 L750.0 584.5999999999999 L752.0 586.0" fill="none" stroke="#e06060" stroke-width="0.8"/><path d="M852 585.3 L854.0 584.5999999999999 L856.0 586.0 L858.0 584.5999999999999 L860.0 586.0 L862.0 584.5999999999999 L864.0 586.0 L866.0 584.5999999999999 L868.0 586.0 L870.0 584.5999999999999 L872.0 586.0 L874.0 584.5999999999999 L876.0 586.0 L878.0 584.5999999999999 L880.0 586.0 L882.0 584.5999999999999 L884.0 586.0 L886.0 584.5999999999999 L888.0 586.0 L890.0 584.5999999999999 L892.0 586.0 L894.0 584.5999999999999 L896.0 586.0 L898.0 584.5999999999999 L900.0 586.0" fill="none" stroke="#e06060" stroke-width="0.8"/><path d="M611 765.3 L613.0 764.5999999999999 L615.0 766.0 L617.0 764.5999999999999 L619.0 766.0 L621.0 764.5999999999999 L623.0 766.0 L625.0 764.5999999999999 L627.0 766.0 L629.0 764.5999999999999 L631.0 766.0 L633.0 764.5999999999999 L635.0 766.0 L637.0 764.5999999999999 L639.0 766.0 L641.0 764.5999999999999 L643.0 766.0 L645.0 764.5999999999999 L647.0 766.0 L649.0 764.5999999999999 L651.0 766.0 L653.0 764.5999999999999 L655.0 766.0 L657.0 764.5999999999999 L659.0 766.0 L661.0 764.5999999999999 L663.0 766.0 L665.0 764.5999999999999 L667.0 766.0 L669.0 764.5999999999999 L671.0 766.0 L673.0 764.5999999999999 L675.0 766.0 L677.0 764.5999999999999 L679.0 766.0 L681.0 764.5999999999999" fill="none" stroke="#e06060" stroke-width="0.8"/></g></svg>
</div></div>
<svg width="1270" height="911" style="left:0;top:0">
 <g stroke="#fff" stroke-width="2.6" fill="#fff" opacity="0.9"><path d="M475.4 654 V668 M468 661.7 H482.8"/></g>
 <g stroke="#333" stroke-width="1"><path d="M475.4 655.5 V659.5 M475.4 664 V667.5 M469.5 661.7 H473.3 M477.5 661.7 H481.5"/></g>
 <g fill="#111"><path d="M475.4 652.6 L472.6 655.8 H478.2 Z"/><path d="M466.8 661.7 L470 658.9 V664.5 Z"/><path d="M484 661.7 L480.8 658.9 V664.5 Z"/><path d="M475.4 669.8 L472.6 666.6 H478.2 Z"/></g>
 <path d="M475.5 661.8 V677.8 L479.3 674.2 L482 680.3 L484.3 679.3 L481.7 673.3 H486.5 Z" fill="#fff" stroke="#111" stroke-width="1" stroke-linejoin="round"/>
</svg>
<div class="a" style="left:35.3px;top:381.3px;width:145.2px;height:117.9px;background:#d4d4d4"></div>
<div class="a" style="left:36px;top:382px;width:586px;height:474px;background:#fefefe;transform:scale(0.24573);transform-origin:0 0;-webkit-text-stroke:0.35px #333">
<div class="a" style="left:45.60000000000002px;top:44.0px;width:502.6px;height:382.0px;border:3.2px solid #4569c6;border-radius:2px"></div>
<div class="a" style="left:48.80000000000001px;top:47.19999999999999px;width:496.20000000000005px;height:375.6px;border:1.8px solid #a9bde6"></div>
<svg width="600" height="480" style="left:0;top:0"><g transform="translate(-438.0,-370.5)" fill="none" stroke-linecap="round" stroke-linejoin="round"><path d="M632.8 462 H642.5 C644.8 462 645.5 441.8 651.2 441.8 C658.1 441.8 663.3 482.7 670.2 482.7 C676.8 482.7 681.8 441.8 688.4 441.8 C694.4 441.8 699 480.2 705 480.2 C710 480.2 710.5 462 714.4 462 H724" stroke="#2a86d9" stroke-width="7.5"/><path d="M760 440.8 H732 C726 440.8 723.5 450 723.5 462.2 C723.5 474 726 483.7 732 483.7 H760" stroke="#2a86d9" stroke-width="7.5"/><path d="M760.5 440.8 C766 440.8 770.8 450 770.8 462.2 C770.8 474 766 483.7 760.5 483.7 C755 483.7 750.2 474 750.2 462.2 C750.2 450 755 440.8 760.5 440.8 Z" stroke="#2a86d9" stroke-width="7.5"/><path d="M759 462.3 H818" stroke="#2a86d9" stroke-width="7.5"/><path d="M791 447.5 C782 443.5 776.5 452 776.5 462 C776.5 472 782 481 791 477" stroke="#2a86d9" stroke-width="7.5"/><path d="M809 452.5 C803.5 448.5 799 456 799 462.5 C799 469 803.5 476.5 809 472.5" stroke="#2a86d9" stroke-width="7.5"/><path d="M818.3 457.2 L827.3 462.3 L818.3 467.4 Z" stroke="#2a86d9" stroke-width="7.5"/><path d="M632.8 462 H642.5 C644.8 462 645.5 441.8 651.2 441.8 C658.1 441.8 663.3 482.7 670.2 482.7 C676.8 482.7 681.8 441.8 688.4 441.8 C694.4 441.8 699 480.2 705 480.2 C710 480.2 710.5 462 714.4 462 H724" stroke="#d6d6d6" stroke-width="2.8"/><path d="M760 440.8 H732 C726 440.8 723.5 450 723.5 462.2 C723.5 474 726 483.7 732 483.7 H760" stroke="#d6d6d6" stroke-width="2.8"/><path d="M760.5 440.8 C766 440.8 770.8 450 770.8 462.2 C770.8 474 766 483.7 760.5 483.7 C755 483.7 750.2 474 750.2 462.2 C750.2 450 755 440.8 760.5 440.8 Z" stroke="#d6d6d6" stroke-width="2.8"/><path d="M759 462.3 H818" stroke="#d6d6d6" stroke-width="2.8"/><path d="M791 447.5 C782 443.5 776.5 452 776.5 462 C776.5 472 782 481 791 477" stroke="#d6d6d6" stroke-width="2.8"/><path d="M809 452.5 C803.5 448.5 799 456 799 462.5 C799 469 803.5 476.5 809 472.5" stroke="#d6d6d6" stroke-width="2.8"/><path d="M818.3 457.2 L827.3 462.3 L818.3 467.4 Z" stroke="#d6d6d6" stroke-width="2.8" fill="#d6d6d6"/></g></svg>
<div class="t" style="left:70.40px;top:140.00px;font-size:23.26px;color:#111;transform:scaleX(0.9900);">WOCC 2023 Charles Kao Best Paper Award</div>
<div class="t" style="left:251.90px;top:170.00px;font-size:15.72px;color:#111;transform:scaleX(1.0397);">presented to</div>
<div class="t" style="left:122.06px;top:192.50px;font-size:21.51px;color:#111;transform:scaleX(0.9807);">Xiao-Feng Qi, Janusz A. Murakowski,</div>
<div class="t" style="left:91.55px;top:216.50px;font-size:21.51px;color:#111;transform:scaleX(0.9807);">Garrett J. Schneider, and Dennis W. Prather</div>
<div class="t" style="left:222.37px;top:266.00px;font-size:15.72px;color:#111;transform:scaleX(1.0397);">for the paper entitled</div>
<div class="t" style="left:76.28px;top:289.00px;font-size:15.84px;color:#111;font-weight:bold;transform:scaleX(0.9664);">C-RAN at Millimeter Wave and Above: Full-Beamspace Radio</div>
<div class="t" style="left:223.59px;top:308.00px;font-size:15.84px;color:#111;font-weight:bold;transform:scaleX(0.9664);">Access Architecture</div>
<div class="t" style="left:182.40px;top:353.50px;font-size:16.13px;color:#111;transform:scaleX(0.9783);">Meilong Jiang, Conference Chair</div>
<div class="t" style="left:171.43px;top:373.50px;font-size:16.13px;color:#111;transform:scaleX(0.9783);">Zhanyang Zhang, Conference Chair</div>
<div class="t" style="left:256.11px;top:394.50px;font-size:16.13px;color:#111;transform:scaleX(0.9783);">6 May 2023</div>
</div>
<div class="t" style="left:13.80px;top:380.20px;font-size:14.83px;color:#555;">1</div>
<div class="a" style="left:34.3px;top:518.3px;width:147.2px;height:119.9px;border:2px solid #d24726"></div>
<div class="a" style="left:36px;top:520px;width:586px;height:474px;background:#fefefe;transform:scale(0.24573);transform-origin:0 0;-webkit-text-stroke:0.35px #333">
<div class="a" style="left:45.60000000000002px;top:44.0px;width:502.6px;height:382.0px;border:3.2px solid #4569c6;border-radius:2px"></div>
<div class="a" style="left:48.80000000000001px;top:47.19999999999999px;width:496.20000000000005px;height:375.6px;border:1.8px solid #a9bde6"></div>
<svg width="600" height="480" style="left:0;top:0"><g transform="translate(-438.0,-370.5)" fill="none" stroke-linecap="round" stroke-linejoin="round"><path d="M632.8 462 H642.5 C644.8 462 645.5 441.8 651.2 441.8 C658.1 441.8 663.3 482.7 670.2 482.7 C676.8 482.7 681.8 441.8 688.4 441.8 C694.4 441.8 699 480.2 705 480.2 C710 480.2 710.5 462 714.4 462 H724" stroke="#2a86d9" stroke-width="7.5"/><path d="M760 440.8 H732 C726 440.8 723.5 450 723.5 462.2 C723.5 474 726 483.7 732 483.7 H760" stroke="#2a86d9" stroke-width="7.5"/><path d="M760.5 440.8 C766 440.8 770.8 450 770.8 462.2 C770.8 474 766 483.7 760.5 483.7 C755 483.7 750.2 474 750.2 462.2 C750.2 450 755 440.8 760.5 440.8 Z" stroke="#2a86d9" stroke-width="7.5"/><path d="M759 462.3 H818" stroke="#2a86d9" stroke-width="7.5"/><path d="M791 447.5 C782 443.5 776.5 452 776.5 462 C776.5 472 782 481 791 477" stroke="#2a86d9" stroke-width="7.5"/><path d="M809 452.5 C803.5 448.5 799 456 799 462.5 C799 469 803.5 476.5 809 472.5" stroke="#2a86d9" stroke-width="7.5"/><path d="M818.3 457.2 L827.3 462.3 L818.3 467.4 Z" stroke="#2a86d9" stroke-width="7.5"/><path d="M632.8 462 H642.5 C644.8 462 645.5 441.8 651.2 441.8 C658.1 441.8 663.3 482.7 670.2 482.7 C676.8 482.7 681.8 441.8 688.4 441.8 C694.4 441.8 699 480.2 705 480.2 C710 480.2 710.5 462 714.4 462 H724" stroke="#d6d6d6" stroke-width="2.8"/><path d="M760 440.8 H732 C726 440.8 723.5 450 723.5 462.2 C723.5 474 726 483.7 732 483.7 H760" stroke="#d6d6d6" stroke-width="2.8"/><path d="M760.5 440.8 C766 440.8 770.8 450 770.8 462.2 C770.8 474 766 483.7 760.5 483.7 C755 483.7 750.2 474 750.2 462.2 C750.2 450 755 440.8 760.5 440.8 Z" stroke="#d6d6d6" stroke-width="2.8"/><path d="M759 462.3 H818" stroke="#d6d6d6" stroke-width="2.8"/><path d="M791 447.5 C782 443.5 776.5 452 776.5 462 C776.5 472 782 481 791 477" stroke="#d6d6d6" stroke-width="2.8"/><path d="M809 452.5 C803.5 448.5 799 456 799 462.5 C799 469 803.5 476.5 809 472.5" stroke="#d6d6d6" stroke-width="2.8"/><path d="M818.3 457.2 L827.3 462.3 L818.3 467.4 Z" stroke="#d6d6d6" stroke-width="2.8" fill="#d6d6d6"/></g></svg>
<div class="t" style="left:70.40px;top:139.00px;font-size:23.26px;color:#111;transform:scaleX(0.9900);">WOCC 2023 Charles Kao Best Paper Award</div>
<div class="t" style="left:251.90px;top:169.40px;font-size:15.72px;color:#111;transform:scaleX(1.0397);">presented to</div>
<div class="t" style="left:102.10px;top:190.30px;font-size:21.51px;color:#111;transform:scaleX(0.9807);">Xueming Zhou, Bomin Mao, and Jiajia Liu</div>
<div class="t" style="left:222.37px;top:236.70px;font-size:15.72px;color:#111;transform:scaleX(1.0397);">for the paper entitled</div>
<div class="t" style="left:66.65px;top:260.00px;font-size:15.84px;color:#111;font-weight:bold;transform:scaleX(0.9664);">A Novel Multi-Objective Routing Scheme Based on Cooperative</div>
<div class="t" style="left:79.53px;top:279.70px;font-size:15.84px;color:#111;font-weight:bold;transform:scaleX(0.9664);">Multi-Agent Reinforcement Learning for Metaverse Services</div>
<div class="t" style="left:256.09px;top:301.50px;font-size:15.84px;color:#111;font-weight:bold;transform:scaleX(0.9664);">in Fixed 6G</div>
<div class="t" style="left:182.40px;top:343.50px;font-size:16.13px;color:#111;transform:scaleX(0.9783);">Meilong Jiang, Conference Chair</div>
<div class="t" style="left:171.43px;top:365.30px;font-size:16.13px;color:#111;transform:scaleX(0.9783);">Zhanyang Zhang, Conference Chair</div>
<div class="t" style="left:256.11px;top:386.00px;font-size:16.13px;color:#111;transform:scaleX(0.9783);">6 May 2023</div>
</div>
<div class="t" style="left:13.00px;top:518.20px;font-size:14.83px;color:#c43e1c;">2</div>
<div class="a" style="left:35.3px;top:656.3px;width:145.2px;height:117.9px;background:#d4d4d4"></div>
<div class="a" style="left:36px;top:657px;width:586px;height:474px;background:#fefefe;transform:scale(0.24573);transform-origin:0 0;-webkit-text-stroke:0.35px #333">
<div class="a" style="left:45.60000000000002px;top:44.0px;width:502.6px;height:382.0px;border:3.2px solid #4569c6;border-radius:2px"></div>
<div class="a" style="left:48.80000000000001px;top:47.19999999999999px;width:496.20000000000005px;height:375.6px;border:1.8px solid #a9bde6"></div>
<svg width="600" height="480" style="left:0;top:0"><g transform="translate(-438.0,-370.5)" fill="none" stroke-linecap="round" stroke-linejoin="round"><path d="M632.8 462 H642.5 C644.8 462 645.5 441.8 651.2 441.8 C658.1 441.8 663.3 482.7 670.2 482.7 C676.8 482.7 681.8 441.8 688.4 441.8 C694.4 441.8 699 480.2 705 480.2 C710 480.2 710.5 462 714.4 462 H724" stroke="#2a86d9" stroke-width="7.5"/><path d="M760 440.8 H732 C726 440.8 723.5 450 723.5 462.2 C723.5 474 726 483.7 732 483.7 H760" stroke="#2a86d9" stroke-width="7.5"/><path d="M760.5 440.8 C766 440.8 770.8 450 770.8 462.2 C770.8 474 766 483.7 760.5 483.7 C755 483.7 750.2 474 750.2 462.2 C750.2 450 755 440.8 760.5 440.8 Z" stroke="#2a86d9" stroke-width="7.5"/><path d="M759 462.3 H818" stroke="#2a86d9" stroke-width="7.5"/><path d="M791 447.5 C782 443.5 776.5 452 776.5 462 C776.5 472 782 481 791 477" stroke="#2a86d9" stroke-width="7.5"/><path d="M809 452.5 C803.5 448.5 799 456 799 462.5 C799 469 803.5 476.5 809 472.5" stroke="#2a86d9" stroke-width="7.5"/><path d="M818.3 457.2 L827.3 462.3 L818.3 467.4 Z" stroke="#2a86d9" stroke-width="7.5"/><path d="M632.8 462 H642.5 C644.8 462 645.5 441.8 651.2 441.8 C658.1 441.8 663.3 482.7 670.2 482.7 C676.8 482.7 681.8 441.8 688.4 441.8 C694.4 441.8 699 480.2 705 480.2 C710 480.2 710.5 462 714.4 462 H724" stroke="#d6d6d6" stroke-width="2.8"/><path d="M760 440.8 H732 C726 440.8 723.5 450 723.5 462.2 C723.5 474 726 483.7 732 483.7 H760" stroke="#d6d6d6" stroke-width="2.8"/><path d="M760.5 440.8 C766 440.8 770.8 450 770.8 462.2 C770.8 474 766 483.7 760.5 483.7 C755 483.7 750.2 474 750.2 462.2 C750.2 450 755 440.8 760.5 440.8 Z" stroke="#d6d6d6" stroke-width="2.8"/><path d="M759 462.3 H818" stroke="#d6d6d6" stroke-width="2.8"/><path d="M791 447.5 C782 443.5 776.5 452 776.5 462 C776.5 472 782 481 791 477" stroke="#d6d6d6" stroke-width="2.8"/><path d="M809 452.5 C803.5 448.5 799 456 799 462.5 C799 469 803.5 476.5 809 472.5" stroke="#d6d6d6" stroke-width="2.8"/><path d="M818.3 457.2 L827.3 462.3 L818.3 467.4 Z" stroke="#d6d6d6" stroke-width="2.8" fill="#d6d6d6"/></g></svg>
<div class="t" style="left:70.40px;top:140.00px;font-size:23.26px;color:#111;transform:scaleX(0.9900);">WOCC 2023 Charles Kao Best Paper Award</div>
<div class="t" style="left:251.90px;top:170.00px;font-size:15.72px;color:#111;transform:scaleX(1.0397);">presented to</div>
<div class="t" style="left:70.40px;top:192.50px;font-size:21.51px;color:#111;transform:scaleX(0.9807);">Zhengshi Wang, Yuyin Li, Anguo Wang, You Wu,</div>
<div class="t" style="left:196.88px;top:216.50px;font-size:21.51px;color:#111;transform:scaleX(0.9807);">Tao Han, and Yao Ge</div>
<div class="t" style="left:222.37px;top:266.00px;font-size:15.72px;color:#111;transform:scaleX(1.0397);">for the paper entitled</div>
<div class="t" style="left:74.46px;top:289.00px;font-size:15.84px;color:#111;font-weight:bold;transform:scaleX(0.9664);">Photovoltaic Power Generation Prediction Based on In-Depth</div>
<div class="t" style="left:211.00px;top:308.00px;font-size:15.84px;color:#111;font-weight:bold;transform:scaleX(0.9664);">Learning for Smart Grid</div>
<div class="t" style="left:182.40px;top:353.50px;font-size:16.13px;color:#111;transform:scaleX(0.9783);">Meilong Jiang, Conference Chair</div>
<div class="t" style="left:171.43px;top:373.50px;font-size:16.13px;color:#111;transform:scaleX(0.9783);">Zhanyang Zhang, Conference Chair</div>
<div class="t" style="left:256.11px;top:394.50px;font-size:16.13px;color:#111;transform:scaleX(0.9783);">6 May 2023</div>
</div>
<div class="t" style="left:13.80px;top:655.20px;font-size:14.83px;color:#555;">3</div>
<div class="a" style="left:1258.3px;top:363px;width:10.7px;height:434px;background:#dbdadb"></div>
<div class="a" style="left:1258.3px;top:364px;width:10.7px;height:16px;background:#fff"></div>
<div class="a" style="left:1258.3px;top:514px;width:10.7px;height:132px;background:#fff;border-left:1px solid #d0d0d0"></div>
<div class="a" style="left:1258.3px;top:781px;width:10.7px;height:16px;background:#fff"></div>
<div class="a" style="left:1258.3px;top:857.5px;width:10.7px;height:14.5px;background:#fff"></div>
<div class="a" style="left:1258.3px;top:873px;width:10.7px;height:14px;background:#fff"></div>
<svg width="1270" height="911">
 <g fill="#666">
  <path d="M1262 375 L1266.5 370 L1271 375 Z"/>
  <path d="M1262 787 L1266.5 792 L1271 787 Z"/>
  <path d="M1262.5 808 L1266.5 803.5 L1270.5 808 Z M1262.5 811.5 L1266.5 807 L1270.5 811.5 Z"/>
  <path d="M1262.5 822 L1266.5 826.5 L1270.5 822 Z M1262.5 825.5 L1266.5 830 L1270.5 825.5 Z"/>
  <path d="M1262 867 L1266.5 862 L1271 867 Z"/>
  <path d="M1262 877.5 L1266.5 882.5 L1271 877.5 Z"/>
 </g>
</svg>
<div class="t" style="left:213.00px;top:863.60px;font-size:14.83px;color:#6a6a6a;transform:scaleX(0.9816);">Click to add notes</div>
<div class="a" style="left:1px;top:888px;width:1268px;height:20.5px;background:#f3f2f2;border-top:1px solid #dadada"></div>
<div class="a" style="left:972.7px;top:889px;width:29.7px;height:19.5px;background:#c8c8c8"></div>
<div class="t" style="left:6.90px;top:894.70px;font-size:11.92px;color:#444;transform:scaleX(0.8453);">Slide 2 of 3</div>
<div class="t" style="left:848.70px;top:894.70px;font-size:11.34px;color:#444;transform:scaleX(0.8947);">Notes</div>
<div class="t" style="left:907.00px;top:894.70px;font-size:11.34px;color:#444;transform:scaleX(0.9122);">Comments</div>
<div class="t" style="left:1225.90px;top:894.70px;font-size:11.34px;color:#444;transform:scaleX(0.8765);">56%</div>
<svg width="1270" height="911">
 <g fill="none" stroke="#777" stroke-width="1">
  <path d="M72.7 894.5 H79.5 V904 H72.7 Z"/><path d="M79.5 904 L86 902 V895.5"/><path d="M81.5 901 L86.5 895.5" stroke-width="1.3"/>
  <path d="M833 899 H844.5 M833 901.5 H844.5 M835 904 H842.5"/>
 </g>
 <path d="M836 897 L838.8 893.5 L841.6 897 Z" fill="#777"/>
 <path d="M890.3 893 H904.7 V902.5 H896 L893 905.5 V902.5 H890.3 Z" fill="#555"/>
 <g fill="none" stroke="#707070" stroke-width="1">
  <rect x="981.5" y="893.5" width="12" height="11.5"/><path d="M984.5 893.5 V905 M984.5 902 H993.5"/><rect x="987" y="896" width="4" height="3.5"/>
  <rect x="1011.5" y="893.5" width="5" height="4.8"/><rect x="1018.5" y="893.5" width="5" height="4.8"/><rect x="1011.5" y="900.3" width="5" height="4.8"/><rect x="1018.5" y="900.3" width="5" height="4.8"/>
  <path d="M1041 894 H1047.5 V905.5 H1041 Z M1047.5 894 H1054 V905.5 H1047.5 M1042.5 896.5 H1046 M1042.5 899 H1046 M1042.5 901.5 H1046 M1049 896.5 H1052.5 M1049 899 H1052.5 M1049 901.5 H1052.5"/>
  <path d="M1071.2 893.5 H1083.3 M1072.5 893.5 V900.5 H1082 V893.5 M1077.2 900.5 V905.5 M1074.5 905.5 H1080 M1074 896.5 H1080"/>
 </g>
 <path d="M1096 899.4 H1103" stroke="#555" stroke-width="1.6"/>
 <path d="M1107.2 899.4 H1205" stroke="#9a9a9a" stroke-width="1"/>
 <path d="M1156.6 896.5 V902.5" stroke="#9a9a9a" stroke-width="1"/>
 <rect x="1131.5" y="894.2" width="5.2" height="11" fill="#666"/>
 <path d="M1209 899.4 H1217.2 M1213.1 895.3 V903.5" stroke="#555" stroke-width="1.6"/>
 <rect x="1258.5" y="893.5" width="12" height="12.5" fill="none" stroke="#777" stroke-width="1"/><path d="M1264.5 894 V905.5 M1259 899.7 H1270" stroke="#f3f2f2" stroke-width="1.6"/><path d="M1260.5 899.7 H1262.5 M1264.5 895.5 V897.5" stroke="#999" stroke-width="0.8"/>
</svg>
<div class="a" style="left:0;top:27px;width:1px;height:883px;background:#eef2f4"></div>
</body></html>
